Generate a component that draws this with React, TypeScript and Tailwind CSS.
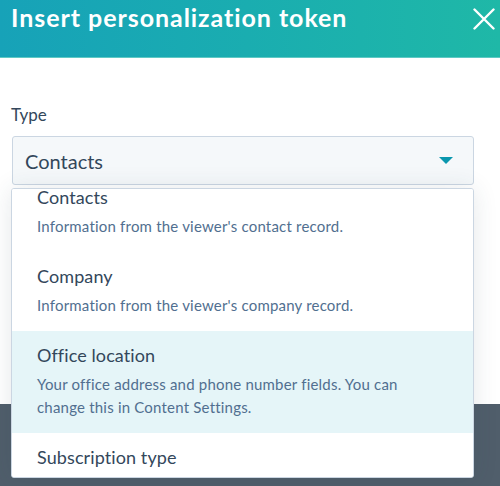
const items = [
  { title: "Contacts", desc: ["Information from the viewer's contact record."] },
  { title: "Company", desc: ["Information from the viewer's company record."] },
  {
    title: "Office location",
    desc: ["Your office address and phone number fields. You can", "change this in Content Settings."],
    active: true,
  },
  { title: "Subscription type", desc: [] as string[] },
]

export default function App() {
  return (
    <div className="relative w-[500px] h-[486px] overflow-hidden bg-[#505e6b] font-['Lato','Open_Sans',sans-serif]">
      {/* Header */}
      <header className="h-[58px] flex items-start justify-between pl-[11px] pr-[5px] pt-[1px] bg-gradient-to-r from-[#17a2b8] to-[#1fb8a7] border-b border-[#5fc9c4]">
        <h1 className="text-[25px] leading-[32px] font-bold text-white tracking-[0.95px]">Insert personalization token</h1>
        <svg width="22" height="22" viewBox="0 0 22 22" className="mt-[7px]">
          <path d="M1.5 1.5 L20.5 20.5 M20.5 1.5 L1.5 20.5" stroke="white" strokeWidth="2.4" strokeLinecap="round" />
        </svg>
      </header>

      {/* Body */}
      <main className="h-[346px] bg-white px-[12px] pt-[46px]">
        <label className="block text-[17px] leading-[22px] text-[#33475b] -ml-px">Type</label>
        <div className="mt-[10px] h-[49px] w-[462px] flex items-center justify-between pl-[12px] pr-[20px] bg-[#f5f8fa] border border-[#cbd6e2] rounded-[3px]">
          <span className="text-[20px] text-[#33475b]">Contacts</span>
          <svg width="14" height="7" viewBox="0 0 14 7">
            <path d="M0 0 L14 0 L7 7 Z" fill="#0a97ae" />
          </svg>
        </div>
      </main>

      {/* Dropdown menu */}
      <div className="absolute left-[11px] top-[188px] w-[463px] h-[290px] overflow-hidden bg-white border border-[#cbd6e2] rounded-[3px] shadow-[0_1px_24px_rgba(45,62,80,0.12)]">
        <div className="-mt-[16px]">
          {items.map((item) => (
            <div
              key={item.title}
              className={`pl-[25px] pr-[12px] pt-[12px] pb-[14px] ${item.active ? "bg-[#e5f5f8]" : "bg-white"}`}
            >
              <div className="text-[18px] leading-[24px] tracking-[0.1px] text-[#33475b]">{item.title}</div>
              {item.desc.length > 0 && (
                <div className="mt-[6px] text-[15px] leading-[23px] tracking-[0.2px] text-[#516f90]">
                  {item.desc.map((d) => (
                    <div key={d}>{d}</div>
                  ))}
                </div>
              )}
            </div>
          ))}
        </div>
      </div>
    </div>
  )
}
